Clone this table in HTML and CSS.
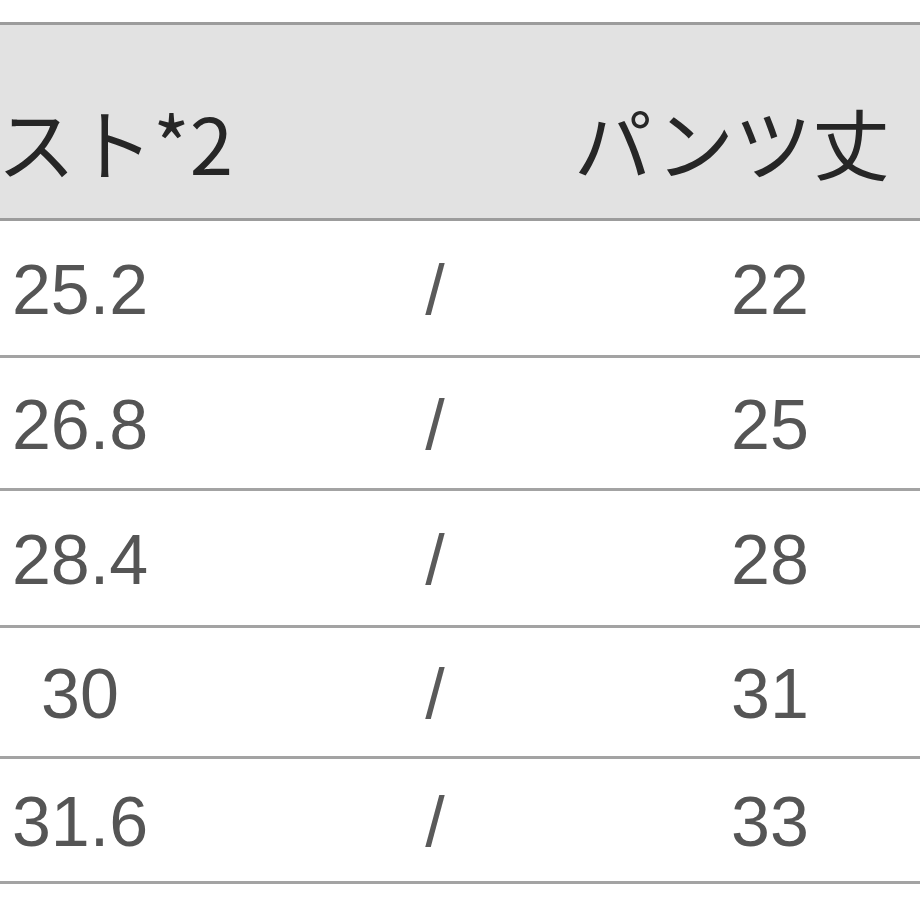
FILE: index.html
```html
<!DOCTYPE html>
<html lang="ja">
<head>
<meta charset="utf-8">
<link rel="stylesheet" href="styles.css">
</head>
<body>
<div class="frame">
<table class="size-table">
  <colgroup>
    <col class="c1"><col class="c2"><col class="c3">
  </colgroup>
  <thead>
    <tr>
      <th class="h1">バスト*2</th>
      <th></th>
      <th class="h3"><span class="h3-label">パンツ丈</span></th>
    </tr>
  </thead>
  <tbody>
    <tr class="r1"><td>25.2</td><td class="sl">/</td><td>22</td></tr>
    <tr class="r2"><td>26.8</td><td class="sl">/</td><td>25</td></tr>
    <tr class="r3"><td>28.4</td><td class="sl">/</td><td>28</td></tr>
    <tr class="r4"><td>30</td><td class="sl">/</td><td>31</td></tr>
    <tr class="r5"><td>31.6</td><td class="sl">/</td><td>33</td></tr>
  </tbody>
</table>
</div>
</body>
</html>
```
FILE: styles.css
```css
html, body {
  margin: 0;
  padding: 0;
  background: #ffffff;
  overflow: hidden;
}
.frame {
  width: 920px;
  height: 920px;
  overflow: hidden;
  padding-top: 22px;
  box-sizing: border-box;
}
.size-table {
  margin-left: -105px;
  width: 1040px;
  border-collapse: collapse;
  table-layout: fixed;
  font-family: "Liberation Sans", "Noto Sans CJK JP", sans-serif;
}
.c1 { width: 370px; }
.c2 { width: 340px; }
.c3 { width: 330px; }
.size-table thead tr {
  background: #e2e2e2;
  border-top: 3px solid #9c9c9c;
  border-bottom: 3px solid #9c9c9c;
}
.size-table th {
  height: 196px;
  padding: 40px 0 0 0;
  box-sizing: border-box;
  font-family: "Noto Sans CJK JP", "Liberation Sans", sans-serif;
  font-weight: 400;
  font-size: 78px;
  line-height: 1.2;
  white-space: nowrap;
  color: #262626;
  text-align: center;
  vertical-align: middle;
}
.size-table th.h1 { text-align: right; padding-right: 32px; }
.size-table th.h3 { text-align: right; padding-right: 45px; }
.h3-label {
  display: inline-block;
  margin-left: -60px;
}
.size-table tbody tr { border-bottom: 3px solid #a3a3a3; }
.size-table td {
  padding: 4px 0 0 0;
  text-align: center;
  vertical-align: middle;
  font-size: 70px;
  line-height: 1;
  color: #555555;
}
.size-table td.sl { color: #5a5a5a; }
.r1 td { height: 130px; }
.r2 td { height: 126px; }
.r3 td { height: 130px; }
.r4 td { height: 124px; }
.r5 td { height: 118px; }
```
